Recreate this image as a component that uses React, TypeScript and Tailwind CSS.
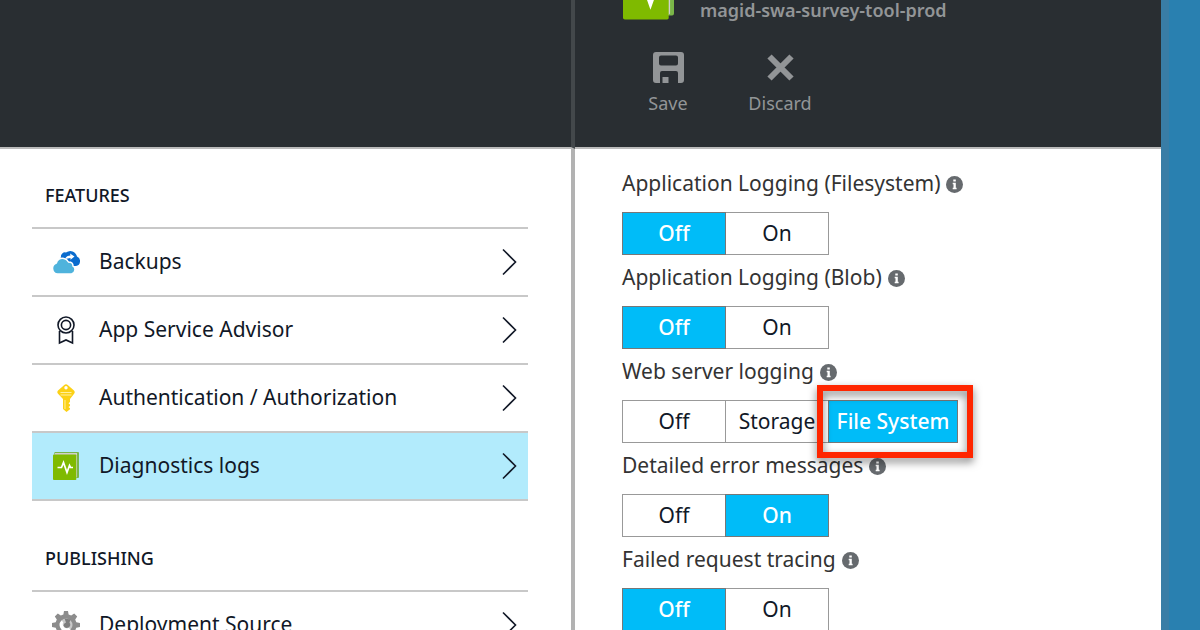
import { useState } from "react";
import type { ReactNode } from "react";
import clsx from "clsx";

type Feature = {
  name: string;
  icon: ReactNode;
  active?: boolean;
};

type Setting = {
  label: string;
  options: string[];
  value: string;
  highlight?: string;
};

function BackupIcon() {
  return (
    <svg viewBox="0 0 28 24" className="w-7 h-6">
      <path d="M9 7a4 4 0 0 1 5-4.500A7 7 0 0 1 25 6.500a5 5 0 0 1-1 9.500H12L8 9z" fill="#0a6cce" />
      <path d="M13 9C14 6.500 16 5.500 18.500 5.500L18 3.500l4.500 3-4 3.200V8" fill="#fff" />
      <path
        d="M5.500 24a5.700 5.700 0 0 1-1.200-11C5 9.500 8.500 7.500 12 8.500c2 .3 3.500 1.600 4.500 3.500 3 0 4.500 2 4.500 4 2.700 1.200 3 7-1.500 8z"
        fill="#4fb3dc"
        stroke="#fff"
        strokeWidth="1.500"
      />
    </svg>
  );
}

function AdvisorIcon() {
  return (
    <svg viewBox="0 0 20 30" className="w-5 h-[30px]" fill="none" stroke="#111827" strokeWidth="1.600">
      <circle cx="10" cy="10" r="8" />
      <circle cx="10" cy="10" r="4.600" />
      <path d="M3.500 16v12l6.500-3 6.500 3V16" />
    </svg>
  );
}

function KeyIcon() {
  return (
    <svg viewBox="0 0 20 30" className="w-5 h-[30px]">
      <path
        fillRule="evenodd"
        d="M8 2.200Q10 .5 12 2.200l6 5.300q1.500 1.500.3 3L14 16v3l-1.500 1.200L14 21.500v1.500l-1.500 1 1.500 1.200v1L10.500 29 7 26V16l-5.200-5.500q-1.300-1.500.2-3zM10 3a1.700 1.700 0 1 0 0 3.400A1.700 1.700 0 0 0 10 3z"
        fill="#fcd116"
      />
      <path d="M4.500 9.500h11M4.500 12h11M9 17v9" stroke="#fff0a0" strokeWidth="1" />
    </svg>
  );
}

function LogsIcon({ className }: { className?: string }) {
  return (
    <svg viewBox="0 0 26 28" className={className}>
      <path d="M2 0h23q1 0 1 1v24q0 1-1 1h-2V3H1Q1 0 2 0z" fill="#7ab648" />
      <path d="M2 1h22v24l-2 2V3H1z" fill="#d0d0cc" />
      <path d="M1 2.500h21.500q.8 0 .8.800v24q0 .7-.8.700H1q-1 0-1-.7V3.300q0-.8 1-.8z" fill="#7fba00" />
      <path d="M4.500 15.500h4l2-5 3.500 10 2.500-7 1 2h2.500" fill="none" stroke="#fff" strokeWidth="1.700" />
    </svg>
  );
}

function GearIcon() {
  return (
    <svg viewBox="0 0 28 28" className="w-7 h-7">
      <path
        d="M12 0h4l.6 3.500 2.600 1.100L22.200 2.600l3 3-2 3 1.100 2.600L28 12v4l-3.700.8-1.100 2.600 2 3-3 3-3-2-2.600 1.100L16 28h-4l-.6-3.500-2.600-1.100-3 2-3-3 2-3-1.100-2.600L0 16v-4l3.700-.8 1.100-2.600-2-3 3-3 3 2 2.600-1.100z"
        fill="#8c8c8c"
      />
      <circle cx="14" cy="14" r="6.500" fill="#c9c9c9" />
      <path d="M9.500 9.500a6.300 6.300 0 0 0 9 9l-1.800-1.800a4 4 0 0 1-5.400-5.400z" fill="#fff" />
      <path d="M12.500 7.500l6 1-1 3q2 3-1 5-4 1.500-5-2 0-2 2.500-3z" fill="#7d7d7d" />
    </svg>
  );
}

function InfoIcon() {
  return (
    <svg viewBox="0 0 17 17" className="w-[17px] h-[17px]" role="img" aria-label="Info">
      <circle cx="8.500" cy="8.500" r="8.500" fill="#666a6e" />
      <path d="M7.300 3.400h2.500v2H7.300zM6.700 6.800h3.100v5h.8v1.400H6.700v-1.400h.8V8.200h-.8z" fill="#fff" />
    </svg>
  );
}

function SaveIcon() {
  return (
    <svg viewBox="0 0 31 31" className="w-[31px] h-[31px]">
      <path
        fillRule="evenodd"
        d="M3 0h25q3 0 3 3v25q0 3-3 3h-3V21q0-2-2-2H9q-2 0-2 2v10H3q-3 0-3-3V3q0-3 3-3zM8 3.500Q6 3.500 6 5.500v6q0 2 2 2h15q2 0 2-2v-6q0-2-2-2zM9.500 25h6v6h-6z"
        fill="#929597"
      />
    </svg>
  );
}

function DiscardIcon() {
  return (
    <svg viewBox="0 0 31 31" className="w-[31px] h-[31px]">
      <path d="M4.500 4.500l22 22M26.500 4.500l-22 22" stroke="#929597" strokeWidth="6" />
    </svg>
  );
}

function Chevron() {
  return (
    <svg viewBox="0 0 16 28" className="w-4 h-7" fill="none" stroke="#111827" strokeWidth="1.600">
      <path d="M2 1.500L14.500 14 2 26.500" />
    </svg>
  );
}

const features: Feature[] = [
  { name: "Backups", icon: <BackupIcon /> },
  { name: "App Service Advisor", icon: <AdvisorIcon /> },
  { name: "Authentication / Authorization", icon: <KeyIcon /> },
  { name: "Diagnostics logs", icon: <LogsIcon className="w-[26px] h-7" />, active: true },
];

const publishing: Feature[] = [{ name: "Deployment Source", icon: <GearIcon /> }];

const settings: Setting[] = [
  { label: "Application Logging (Filesystem)", options: ["Off", "On"], value: "Off" },
  { label: "Application Logging (Blob)", options: ["Off", "On"], value: "Off" },
  { label: "Web server logging", options: ["Off", "Storage", "File System"], value: "File System", highlight: "File System" },
  { label: "Detailed error messages", options: ["Off", "On"], value: "On" },
  { label: "Failed request tracing", options: ["Off", "On"], value: "Off" },
];

function FeatureList({ title, items }: { title: string; items: Feature[] }) {
  return (
    <section>
      <h2 className="pl-[13px] pb-5 text-[18px] leading-6 font-medium text-[#111827]">{title}</h2>
      <ul className="border-b-2 border-[#c8c8c8]">
        {items.map((item) => (
          <li key={item.name} className="border-t-2 border-[#c8c8c8]">
            <a
              href="#"
              className={clsx("flex items-center h-[66px] pl-5 pr-[11px] text-[21px] text-[#111827]", item.active && "bg-[#b2ebfc]")}
            >
              <span className="w-7 mr-[19px] flex justify-center">{item.icon}</span>
              <span className="flex-1 whitespace-nowrap">{item.name}</span>
              <Chevron />
            </a>
          </li>
        ))}
      </ul>
    </section>
  );
}

function Toggle({ setting }: { setting: Setting }) {
  const [value, setValue] = useState(setting.value);

  return (
    <div role="group" aria-label={setting.label}>
      <div className="flex items-center gap-1.5 h-7 mb-3.5 text-[21px] whitespace-nowrap text-[#333]">
        {setting.label}
        <InfoIcon />
      </div>
      <div className="flex h-[43px]">
        {setting.options.map((option) => (
          <button
            key={option}
            type="button"
            aria-pressed={value === option}
            onClick={() => setValue(option)}
            className={clsx(
              "relative -mr-px border text-[21px] whitespace-nowrap",
              option === "File System" ? "w-[130px]" : "w-[104px]",
              value === option ? "z-10 bg-[#00bcf8] border-[#777] text-white font-medium" : "bg-white border-[#999] text-[#111827]"
            )}
          >
            {option}
            {setting.highlight === option && (
              <span className="absolute -top-4 -bottom-4 -left-3 -right-4 border-[6px] border-[#ff2600] drop-shadow-[0_4px_4px_rgba(0,0,0,0.5)]" />
            )}
          </button>
        ))}
      </div>
    </div>
  );
}

export default function App() {
  return (
    <div className="grid grid-cols-[575fr_586fr_39px] h-screen overflow-hidden bg-white font-['Noto_Sans','Open_Sans',sans-serif]">
      <div className="flex flex-col min-w-0">
        <header className="h-[149px] shrink-0 bg-[#292e32] border-b-2 border-b-[#bbb] border-r-4 border-r-[#43484b]" />
        <nav className="flex-1 flex flex-col gap-[45px] pt-[34px] pl-8 pr-[43px] border-r-4 border-[#b2b2b2]">
          <FeatureList title="FEATURES" items={features} />
          <FeatureList title="PUBLISHING" items={publishing} />
        </nav>
      </div>

      <main className="flex flex-col min-w-0">
        <header className="h-[149px] shrink-0 pl-12 bg-[#292e32] border-b-2 border-[#bbb] text-[#929597]">
          <div className="flex items-end gap-[26px] h-5">
            <LogsIcon className="w-[51px] h-14" />
            <h1 className="text-[18px] leading-5 font-semibold whitespace-nowrap">magid-swa-survey-tool-prod</h1>
          </div>
          <div className="flex mt-8 text-[18px] leading-6">
            <button type="button" className="w-[90px] flex flex-col items-center gap-2">
              <SaveIcon />
              Save
            </button>
            <button type="button" className="w-[134px] flex flex-col items-center gap-2">
              <DiscardIcon />
              Discard
            </button>
          </div>
        </header>
        <div className="flex-1 flex flex-col gap-[9px] pt-[21px] pl-[47px]">
          {settings.map((setting) => (
            <Toggle key={setting.label} setting={setting} />
          ))}
        </div>
      </main>

      <aside className="bg-[#2980b0] border-l-8 border-[#397da6]" />
    </div>
  );
}
